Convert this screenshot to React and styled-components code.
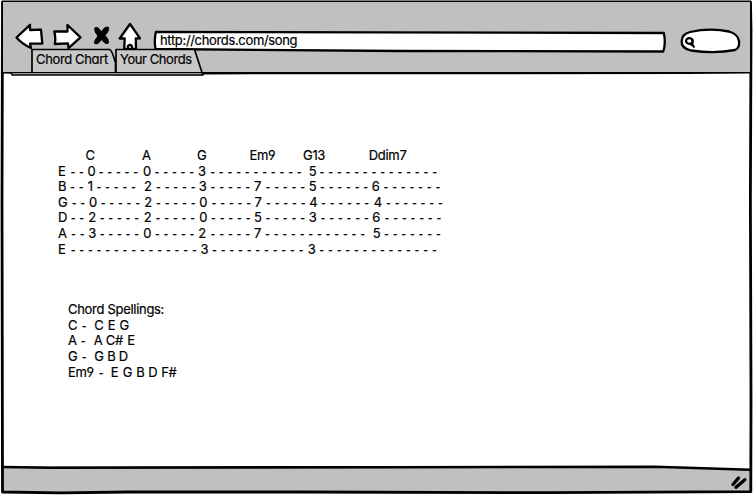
import React from "react";
import styled, { createGlobalStyle } from "styled-components";

const GlobalStyle = createGlobalStyle`
  * { box-sizing: border-box; }
  body { margin: 0; background: #fff; overflow: hidden; }
`;

const Window = styled.div`
  position: relative;
  width: 753px;
  height: 495px;
  padding: 2px 3px 3px;
  display: flex;
  flex-direction: column;
  background: #fff;
  color: #000;
  font-family: Inter, "Liberation Sans", sans-serif;
  font-feature-settings: "cv11" 1, "cv04" 1;
  font-size: 13px;
  line-height: 15.6px;
  -webkit-text-stroke: 0.2px #000;
`;

const Outline = styled.svg`
  position: absolute;
  inset: 0;
  pointer-events: none;
  fill: none;
  stroke: #000;
  stroke-linecap: round;
  stroke-linejoin: round;
  overflow: visible;
`;

const Header = styled.header`
  position: relative;
  z-index: 1;
  flex: none;
  height: 70px;
  background: #c0c0c0;
`;

const Toolbar = styled.div`
  display: flex;
  height: 47px;
  padding: 20px 0 0 12px;
`;

const Icon = styled.svg`
  flex: none;
  width: ${(p) => p.$w}px;
  height: 28px;
  margin-right: ${(p) => p.$gap}px;
  fill: #fff;
  stroke: #000;
  stroke-width: 2.3;
  stroke-linejoin: round;
  stroke-linecap: round;
`;

const Field = styled.div`
  position: relative;
  flex: none;
  width: ${(p) => p.$w}px;
  height: 25px;
  margin-right: ${(p) => p.$gap || 0}px;
`;

const FieldText = styled.span`
  position: relative;
  display: block;
  padding: 11px 0 0 8px;
  white-space: pre;
  letter-spacing: -0.34px;
`;

const Tabs = styled.nav`
  position: relative;
  display: flex;
  height: 26px;
  padding-left: 28px;
`;

const Tab = styled.div`
  position: relative;
  width: ${(p) => p.$w}px;
  padding: 3px 0 0 5px;
  white-space: pre;
  letter-spacing: ${(p) => p.$track}px;
`;

const TabLabel = styled.span`
  position: relative;
`;

const Content = styled.main`
  flex: 1;
  padding: 76px 0 0 55px;
`;

const Row = styled.div`
  display: flex;
  height: 15.6px;
  padding-left: ${(p) => p.$indent || 0}px;
  white-space: pre;
`;

const Note = styled.span`
  flex: none;
  width: ${(p) => p.$w}px;
  letter-spacing: ${(p) => p.$track || 0}px;
`;

const Dashes = styled(Note)`
  font-family: "Liberation Sans", sans-serif;
  word-spacing: 0.72px;
`;

const Spellings = styled.section`
  padding: 45px 0 0 10px;
`;

const Footer = styled.footer`
  flex: none;
  height: 26px;
  background: #c0c0c0;
  clip-path: polygon(0 0, 88% 0, 100% 3px, 100% 100%, 0 100%);
`;

const header = [[85.6, "C"], [142, "A"], [197, "G"], [249.5, "Em9"], [303, "G13"], [368.8, "Ddim7"]];

// Numbers stand for a run of that many dashes.
const strings = [
  [[57.3, "E"], [70, 2], [86.8, "0"], [98.2, 5], [142.3, "0"], [154.2, 5], [197.4, "3"], [209.8, 11], [308, "5"], [319.2, 14]],
  [[57.3, "B"], [69.6, 2], [87, "1"], [96, 5], [143.2, "2"], [155.6, 5], [198.1, "3"], [210.2, 5], [253.3, "7"], [265.1, 5], [308, "5"], [319.6, 6], [371, "6"], [383.1, 7]],
  [[57.3, "G"], [71.2, 2], [88.3, "0"], [100.2, 5], [143.5, "2"], [155.6, 5], [198.7, "0"], [211.2, 5], [253.9, "7"], [265.6, 5], [308.5, "4"], [320.6, 6], [373.1, "4"], [385.6, 7]],
  [[57.3, "D"], [70.2, 2], [87.5, "2"], [99.2, 5], [143.1, "2"], [155.2, 5], [198.7, "0"], [210.6, 5], [253.4, "5"], [265.1, 5], [308.1, "3"], [320.2, 6], [371.5, "6"], [384.2, 7]],
  [[57.3, "A"], [70.6, 2], [87.5, "3"], [99.2, 5], [142.5, "0"], [154.5, 5], [197.7, "2"], [210.2, 5], [253.4, "7"], [264.6, 12], [372, "5"], [383.6, 7]],
  [[57.3, "E"], [70.2, 15], [199.7, "3"], [211.6, 11], [307, "3"], [318.9, 14]],
];

const spellings = [
  [[67.5, "Chord Spellings:"]],
  [[67.5, "C"], [81.5, 1], [93.7, "C"], [107.2, "E"], [119, "G"]],
  [[67.5, "A"], [80.5, 1], [93.2, "A"], [105.2, "C#"], [126.7, "E"]],
  [[67.5, "G"], [81.5, 1], [93.7, "G"], [106.7, "B"], [118.2, "D"]],
  [[67.5, "Em9"], [98.5, 1], [110.2, "E"], [122.2, "G"], [135.7, "B"], [147.7, "D"], [160.7, "F#"]],
];

function Line({ cells, origin }) {
  return (
    <Row $indent={cells[0][0] - origin}>
      {cells.map(([x, value], i) => {
        const w = (i + 1 < cells.length ? cells[i + 1][0] : x + 130) - x;
        return typeof value === "number" ? (
          <Dashes key={i} $w={w}>{Array(value).fill("-").join(" ")}</Dashes>
        ) : (
          <Note key={i} $w={w} $track={value.length > 1 ? -0.3 : 0}>{value}</Note>
        );
      })}
    </Row>
  );
}

export default function App() {
  return (
    <>
      <GlobalStyle />
      <Window>
        <Header>
          <Toolbar>
            <Icon $w={30} $gap={7} viewBox="15 22 30 28">
              <path d="M16.5 37.5L30 24.8L30 30L41 29.6L42.3 43.5L30 43.6L31 48Q22 44 16.5 37.5Z" />
            </Icon>
            <Icon $w={30} $gap={9} viewBox="52 22 30 28">
              <path d="M54.3 31.5L67.5 31.5L67.5 25L80.5 37.3L68.5 48.2L68 43.3L54.8 44Q56 38 54.3 31.5Z" />
            </Icon>
            <Icon $w={20} $gap={6} viewBox="91 22 20 28">
              <path d="M95 28Q97.5 25.5 101.5 32Q104.5 26 108.5 27.3Q109.8 30 105 35.5Q109.8 40.5 108 43.5Q105 44.5 101.5 39.5Q97.5 45.5 94.5 43.3Q93.7 41.5 98 36Q93.5 30.5 95 28Z" fill="#000" strokeWidth="1" />
            </Icon>
            <Icon $w={24} $gap={11} viewBox="117 22 24 28">
              <path d="M119.7 38.5L130 24L140 38.3L135.8 38.5L136 49L124.2 49L124.7 38.5Z" />
              <path d="M128 48L128 45.8Q130 44.2 131.8 45.8L132 48" />
            </Icon>
            <Field $w={512} $gap={14}>
              <Outline width="512" height="28" viewBox="152 22 512 28" strokeWidth="2.3">
                <path d="M155.8 32L663.8 33Q666 43 663.3 51.5L400 51L155.5 49Q154 41 155.8 32Z" fill="#fff" />
              </Outline>
              <FieldText>http://chords.com/song</FieldText>
            </Field>
            <Field $w={62}>
              <Outline width="62" height="28" viewBox="678 22 62 28" strokeWidth="2.3">
                <path d="M690 32Q710 27.5 729 31.5Q738 34 739 41Q740 48 735 50Q715 54 691 50.5Q681 48 681.7 41Q682 34 690 32Z" fill="#fff" />
                <ellipse cx="689.3" cy="41" rx="3.3" ry="2.8" />
                <path d="M692.5 39.5L692.6 44.5L694 47M690.5 44.2L693 46" strokeWidth="1.8" />
              </Outline>
            </Field>
          </Toolbar>
          <Tabs>
            <Outline width="210" height="30" viewBox="3 49 210 30" strokeWidth="1.7">
              <path d="M32 49.5L109.5 49.5Q112 50 115.5 63L115.5 73L32 73Z" fill="#c8c8c8" />
              <path d="M116 49.5L194.5 49.5L202.7 74.5L116 74.5Z" fill="#c8c8c8" />
              <path d="M11 72.6L202 72.6L203 75L12 75Z" fill="#c8c8c8" strokeWidth="1.4" />
            </Outline>
            <Tab $w={84} $track={-0.36}><TabLabel>Chord Chart</TabLabel></Tab>
            <Tab $w={86} $track={-0.42}><TabLabel>Your Chords</TabLabel></Tab>
          </Tabs>
        </Header>
        <Content>
          <Line cells={header} origin={58} />
          {strings.map((cells, i) => <Line key={i} cells={cells} origin={58} />)}
          <Spellings>
            {spellings.map((cells, i) => <Line key={i} cells={cells} origin={68} />)}
          </Spellings>
        </Content>
        <Footer />
        <Outline width="753" height="495" viewBox="0 0 753 495" strokeWidth="2.8">
          <path d="M3 72.4L11 72.5M203 73.2L500 73L686 72.7L750 72.2" strokeWidth="2.4" />
          <path d="M2.5 2L750.5 2L751 30L750.4 200L751 400L750.8 491.7L550 492.7L300 492L130 492L60 492.8L2.5 492L2 200Z" />
          <path d="M3 467L50 467.7L400 467.2L655 466.7L750 469.7" strokeWidth="2.6" />
          <path d="M738.5 478L733 484.5M744.8 479.7L736 487.2" strokeWidth="3.4" />
        </Outline>
      </Window>
    </>
  );
}
